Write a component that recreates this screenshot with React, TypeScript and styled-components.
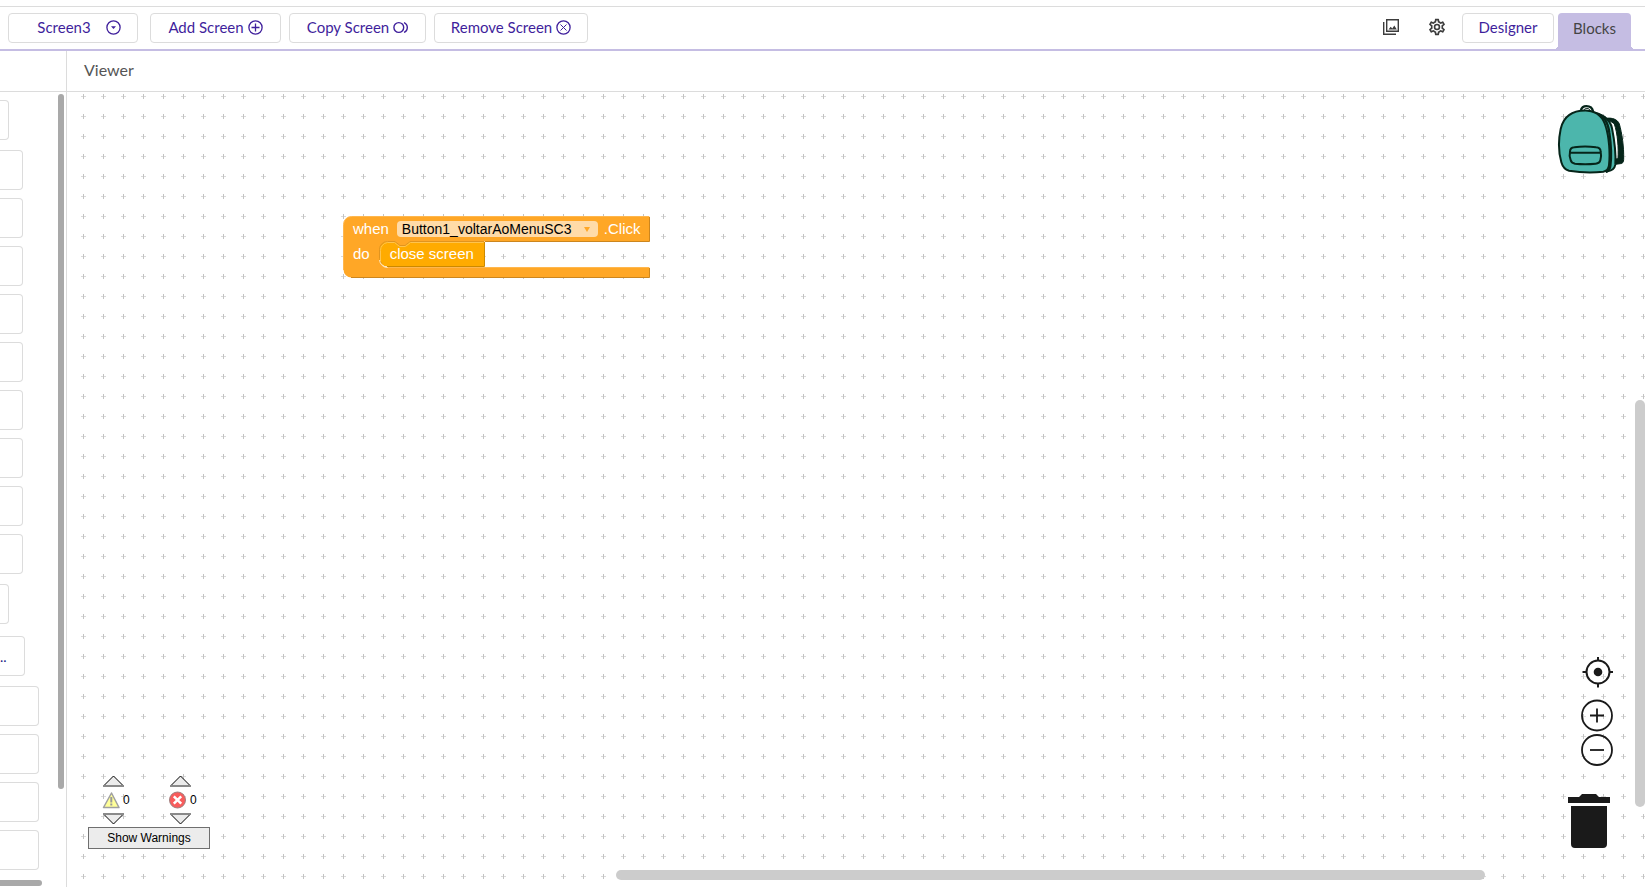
import React from 'react';
import styled, { createGlobalStyle } from 'styled-components';

const GlobalStyle = createGlobalStyle`
  * { box-sizing: border-box; }
  body { margin: 0; background: #fff; font-family: Lato, "Liberation Sans", sans-serif; }
  button, select { font-family: inherit; margin: 0; }
  svg { display: block; }
`;

const Page = styled.div`
  display: flex;
  flex-direction: column;
  height: 100vh;
  overflow: hidden;
  padding-top: 6px;
`;

const Toolbar = styled.header`
  display: flex;
  justify-content: space-between;
  flex: none;
  height: 45px;
  padding: 6px 14px 0 8px;
  border-top: 1px solid #dcdcdc;
  border-bottom: 2px solid #c5bde3;
`;

const Group = styled.div`
  display: flex;
  align-items: flex-start;
  gap: 8px;
`;

const ToolButton = styled.button<{ $width: number; $menu?: boolean }>`
  display: flex;
  align-items: center;
  justify-content: center;
  gap: ${(p) => (p.$menu ? 15 : 4)}px;
  width: ${(p) => p.$width}px;
  height: 30px;
  margin-right: ${(p) => (p.$menu ? 4 : 0)}px;
  padding: 0 0 2px ${(p) => (p.$menu ? 12 : 0)}px;
  border: 1px solid #dcdcdc;
  border-radius: 4px;
  background: #fff;
  color: #3f1f9c;
  font-size: 15px;
  line-height: 20px;
  white-space: nowrap;
`;

const IconButton = styled.button<{ $after: number }>`
  width: 18px;
  height: 18px;
  margin: 5px ${(p) => p.$after}px 0 0;
  padding: 0;
  border: 0;
  background: none;
  color: #3c3c3c;
`;

const ActiveTab = styled.button`
  position: relative;
  width: 73px;
  height: 38px;
  margin-left: -4px;
  padding: 0 0 8px;
  border: 0;
  border-radius: 4px 4px 0 0;
  background: #c5bde3;
  color: #444;
  font-size: 15px;
  line-height: 20px;

  &::before,
  &::after {
    content: '';
    position: absolute;
    bottom: 2px;
    width: 4px;
    height: 4px;
  }
  &::before {
    left: -4px;
    background: radial-gradient(circle at 0 0, transparent 4px, #c5bde3 4px);
  }
  &::after {
    right: -4px;
    background: radial-gradient(circle at 100% 0, transparent 4px, #c5bde3 4px);
  }
`;

const Workspace = styled.div`
  display: flex;
  flex: 1;
  min-height: 0;
`;

const Sidebar = styled.aside`
  display: flex;
  flex-direction: column;
  flex: none;
  width: 67px;
  border-right: 1px solid #dcdcdc;
`;

const PanelTitle = styled.div`
  flex: none;
  height: 41px;
  padding: 9px 17px;
  border-bottom: 1px solid #dcdcdc;
  color: #555;
  font-size: 16px;
  line-height: 20px;
`;

const SidebarBody = styled.div`
  display: grid;
  grid-template-columns: 1fr 6px;
  grid-template-rows: 1fr 6px;
  flex: 1;
  min-height: 0;
  padding: 2px 2px 1px 0;
`;

const Tree = styled.nav`
  display: flex;
  flex-direction: column;
  gap: 8px;
  min-height: 0;
  overflow: hidden;
  padding-top: 6px;
`;

const TreeItem = styled.button<{ $width: number; $above?: number }>`
  flex: none;
  width: ${(p) => p.$width}px;
  height: 40px;
  margin-top: ${(p) => p.$above ?? 0}px;
  padding: 0;
  border: 1px solid #dcdcdc;
  border-left: 0;
  border-radius: 0 4px 4px 0;
  background: #fff;
  color: #1d1d84;
  font-size: 14px;
  text-align: left;
`;

const SideThumbV = styled.div`
  height: calc(100% - 91px);
  border-radius: 3px;
  background: #a9a9a9;
`;

const SideThumbH = styled.div`
  width: 42px;
  border-radius: 0 3px 3px 0;
  background: #a9a9a9;
`;

const Viewer = styled.main`
  display: flex;
  flex-direction: column;
  flex: 1;
  min-width: 0;
`;

const Canvas = styled.section`
  position: relative;
  flex: 1;
  min-height: 0;
  overflow: hidden;
`;

const Grid = styled.svg`
  width: 100%;
  height: 100%;
`;

const Block = styled.div`
  position: absolute;
  left: 276px;
  top: 124px;
  width: 308px;
  height: 63px;
  color: #fff;
  font: 15px/18px "Liberation Sans", Arial, sans-serif;
`;

const BlockShape = styled.svg`
  position: absolute;
  inset: 0;
`;

const BlockRow = styled.div`
  position: relative;
  display: flex;
  align-items: center;
  height: 25px;
  padding-left: 10px;
`;

const EventField = styled.label`
  position: relative;
  margin: 0 6px 0 8px;

  svg {
    position: absolute;
    right: 8px;
    top: 6px;
  }
`;

const EventSelect = styled.select`
  display: block;
  width: 201px;
  height: 16px;
  padding: 0 0 0 5px;
  border: 0;
  border-radius: 4px;
  appearance: none;
  background: #ffdba8;
  color: #000;
  font: 14px/16px "Liberation Sans", Arial, sans-serif;
`;

const Statement = styled.span`
  margin-left: 20px;
`;

const Backpack = styled.button`
  position: absolute;
  top: 12px;
  right: 20px;
  padding: 0;
  border: 0;
  background: none;
`;

const Controls = styled.div`
  position: absolute;
  right: 31px;
  bottom: 120px;
  display: flex;
  flex-direction: column;
  gap: 2px;
`;

const ControlButton = styled.button<{ $below?: number }>`
  width: 33px;
  height: 33px;
  margin-bottom: ${(p) => p.$below ?? 0}px;
  padding: 0;
  border: 0;
  background: none;
`;

const Trash = styled.button`
  position: absolute;
  right: 35px;
  bottom: 39px;
  padding: 0;
  border: 0;
  background: none;
`;

const Warnings = styled.div`
  position: absolute;
  left: 21px;
  bottom: 38px;
  width: 122px;
  font: 12px/16px "Liberation Sans", Arial, sans-serif;
`;

const Counters = styled.div`
  display: flex;
  gap: 38px;
  padding: 0 0 2px 14px;
`;

const Counter = styled.div`
  display: grid;
  justify-items: start;
  width: 29px;
  row-gap: 4px;
`;

const StepButton = styled.button`
  margin-left: 1px;
  padding: 0;
  border: 0;
  background: none;
`;

const Count = styled.div`
  display: flex;
  align-items: center;
  gap: 3px;
  height: 18px;
`;

const ShowWarnings = styled.button`
  width: 100%;
  height: 22px;
  padding: 0;
  border: 1px solid #6f6f6f;
  background: #ececec;
  color: #000;
  font-size: 12px;
  line-height: 20px;
`;

const ScrollV = styled.div`
  position: absolute;
  top: 308px;
  right: 0;
  bottom: 80px;
  width: 10px;
  border-radius: 5px;
  background: #ccc;
`;

const ScrollH = styled.div`
  position: absolute;
  left: 549px;
  right: 160px;
  bottom: 7px;
  height: 10px;
  border-radius: 5px;
  background: #ccc;
`;

type Glyph = 'menu' | 'add' | 'copy' | 'remove';

function ToolIcon({ kind }: { kind: Glyph }) {
  return (
    <svg width="15" height="15" viewBox="0 0 15 15" fill="none" stroke="currentColor" strokeWidth="1.3">
      {kind === 'copy' ? (
        <path d="M10.700 7.500a4.900 4.900 0 1 1-9.800 0a4.900 4.900 0 0 1 9.800 0zM11 2.600c4.400 1.800 4.400 8 0 9.800" strokeWidth="1.4" />
      ) : (
        <circle cx="7.5" cy="7.5" r="6.6" />
      )}
      {kind === 'menu' && <path d="M5 6.3h5L7.5 9z" fill="currentColor" stroke="none" />}
      {kind === 'add' && <path d="M7.5 3.5v8M3.5 7.5h8" />}
      {kind === 'remove' && <path d="M4.5 4.5l6 6M10.5 4.5l-6 6" strokeWidth="1" />}
    </svg>
  );
}

function StepArrow({ down = false }: { down?: boolean }) {
  return (
    <svg width="21" height="12" viewBox="0 0 21 12">
      <path d={down ? 'M.5 1h20l-10 10z' : 'M.5 11h20l-10-10z'} fill="#ececec" />
      <path d={down ? 'M.5 1l10 10l10-10' : 'M.5 11l10-10l10 10'} fill="none" stroke="#000" />
      <path d={down ? 'M0 1h21' : 'M0 11h21'} stroke="#8a8a8a" strokeWidth="2" />
    </svg>
  );
}

const treeItems: { width: number; above?: number; text?: string }[] = [
  { width: 9 },
  { width: 23, above: 2 },
  ...Array.from({ length: 8 }, () => ({ width: 23 })),
  { width: 9, above: 2 },
  { width: 25, above: 4, text: '..' },
  { width: 39, above: 2 },
  { width: 39 },
  { width: 39 },
  { width: 39 },
];

export default function App() {
  return (
    <Page>
      <GlobalStyle />
      <Toolbar>
        <Group>
          <ToolButton $width={130} $menu>
            Screen3
            <ToolIcon kind="menu" />
          </ToolButton>
          <ToolButton $width={131}>
            Add Screen
            <ToolIcon kind="add" />
          </ToolButton>
          <ToolButton $width={137}>
            Copy Screen
            <ToolIcon kind="copy" />
          </ToolButton>
          <ToolButton $width={154}>
            Remove Screen
            <ToolIcon kind="remove" />
          </ToolButton>
        </Group>
        <Group>
          <IconButton $after={20} aria-label="Assets">
            <svg width="18" height="18" viewBox="0 0 18 18" fill="none" stroke="currentColor" strokeWidth="1.4">
              <path d="M4.7 1.7h11.6v11.6H4.7zM1.7 4v12.3H14" />
              <path d="M6.5 11.5l2.2-2.7 1.6 1.7 2-3 2.5 4z" fill="currentColor" stroke="none" />
            </svg>
          </IconButton>
          <IconButton $after={8} aria-label="Settings">
            <svg width="18" height="18" viewBox="1 1 22 22" fill="currentColor">
              <path d="M19.43 12.98c.04-.32.07-.64.07-.98s-.03-.66-.07-.98l2.11-1.65c.19-.15.24-.42.12-.64l-2-3.46a.5.5 0 0 0-.61-.22l-2.49 1c-.52-.4-1.08-.73-1.69-.98l-.38-2.65A.49.49 0 0 0 14 2h-4c-.25 0-.46.18-.49.42l-.38 2.65c-.61.25-1.17.59-1.69.98l-2.49-1a.5.5 0 0 0-.61.22l-2 3.46c-.13.22-.07.49.12.64l2.11 1.65c-.04.32-.07.65-.07.98s.03.66.07.98l-2.11 1.65c-.19.15-.24.42-.12.64l2 3.46c.12.22.39.3.61.22l2.49-1c.52.4 1.08.73 1.69.98l.38 2.65c.03.24.24.42.49.42h4c.25 0 .46-.18.49-.42l.38-2.65c.61-.25 1.17-.59 1.69-.98l2.49 1c.23.09.49 0 .61-.22l2-3.46c.12-.22.07-.49-.12-.64zm-1.98-1.71c.04.31.05.52.05.73s-.02.43-.05.73l-.14 1.13.89.7 1.08.84-.7 1.21-1.27-.51-1.04-.42-.9.68c-.43.32-.84.56-1.25.73l-1.06.43-.16 1.13-.2 1.35h-1.4l-.35-2.48-1.06-.43c-.43-.18-.83-.41-1.23-.71l-.91-.7-1.06.43-1.27.51-.7-1.21 1.08-.84.89-.7-.14-1.13A7 7 0 0 1 6.5 12c0-.2.02-.43.05-.73l.14-1.13-.89-.7-1.08-.84.7-1.21 1.27.51 1.04.42.9-.68c.43-.32.84-.56 1.25-.73l1.06-.43.16-1.13.2-1.35h1.39l.35 2.48 1.06.43c.43.18.83.41 1.23.71l.91.7 1.06-.43 1.27-.51.7 1.21-1.07.85-.89.7zM12 8a4 4 0 1 0 0 8 4 4 0 0 0 0-8zm0 6a2 2 0 1 1 0-4 2 2 0 0 1 0 4z" />
            </svg>
          </IconButton>
          <ToolButton $width={92}>Designer</ToolButton>
          <ActiveTab>Blocks</ActiveTab>
        </Group>
      </Toolbar>

      <Workspace>
        <Sidebar>
          <PanelTitle />
          <SidebarBody>
            <Tree aria-label="Blocks">
              {treeItems.map((item, i) => (
                <TreeItem key={i} $width={item.width} $above={item.above}>
                  {item.text}
                </TreeItem>
              ))}
            </Tree>
            <SideThumbV />
            <SideThumbH />
          </SidebarBody>
        </Sidebar>

        <Viewer>
          <PanelTitle>Viewer</PanelTitle>
          <Canvas>
            <Grid>
              <defs>
                <pattern id="grid" width="20" height="20" x="6" y="-6" patternUnits="userSpaceOnUse">
                  <path d="M8 10.500h5" stroke="#dadada" />
                  <path d="M10.500 8v5" stroke="#c4c4c4" />
                </pattern>
              </defs>
              <rect width="100%" height="100%" fill="url(#grid)" />
            </Grid>

            <Block>
              <BlockShape width="308" height="63" viewBox="0 0 308 63" fill="none">
                <path
                  d="M8.500 .5H306.500V25.500H67l-5 4h-5l-5-4h-7a8 8 0 0 0-8 8v10a8 8 0 0 0 8 8H306.500V61.500H8.500a8 8 0 0 1-8-8V8.500a8 8 0 0 1 8-8z"
                  fill="#ffa726"
                />
                <path d="M306.500 1V25.500H142M306.500 52v9.500H8" stroke="#cc861e" />
                <path d="M.5 54V8.500a8 8 0 0 1 8-8H306M45 51.500H306" stroke="#ffb74d" />
                <path
                  d="M44.500 25.500H52l5 4h5l5-4h74v25H44.500a8 8 0 0 1-8-8v-9a8 8 0 0 1 8-8z"
                  fill="#ffab00"
                />
                <path d="M141.500 26v24.500H44" stroke="#cc8900" />
                <path d="M39 47.500a8 8 0 0 1-2.500-5v-9a8 8 0 0 1 8-8H52l5 4h5l5-4h74" stroke="#e09420" />
                <path d="M37.500 45v-10.500a8 8 0 0 1 7-8H51.500l5 4h6l5-4h73" stroke="#ffc44d" />
                <path d="M36.500 44a8 8 0 0 0 8 7.500" stroke="#ffe3b3" />
              </BlockShape>
              <BlockRow>
                <span>when</span>
                <EventField>
                  <EventSelect aria-label="Component" defaultValue="Button1_voltarAoMenuSC3">
                    <option>Button1_voltarAoMenuSC3</option>
                  </EventSelect>
                  <svg width="6" height="5" viewBox="0 0 6 5">
                    <path d="M0 0h6L3 5z" fill="#ffa726" />
                  </svg>
                </EventField>
                <span>.Click</span>
              </BlockRow>
              <BlockRow>
                <span>do</span>
                <Statement>close screen</Statement>
              </BlockRow>
            </Block>

            <Backpack aria-label="Backpack">
              <svg width="68" height="70" viewBox="636 312 204 210" strokeLinecap="round" strokeLinejoin="round">
                <path
                  d="M784 355C800 352 818 358 823 372C831 400 837 440 836 478Q836 491 826 491L811 493L812 477L819 476C821 446 818 400 808 372Z"
                  fill="#06251a"
                  stroke="#06251a"
                  strokeWidth="3"
                />
                <path d="M708 332C708 314 740 313 744 334" fill="none" stroke="#06251a" strokeWidth="7" />
                <path d="M716 331C719 323 732 323 736 331Z" fill="#fff" stroke="#06251a" strokeWidth="3" />
                <path
                  d="M740 336C770 340 795 357 801 385C808 420 813 460 811 494Q808 511 788 514L740 500Z"
                  fill="#4cb6ac"
                  stroke="#06251a"
                  strokeWidth="6"
                />
                <path d="M757 342C782 350 790 372 793 398C799 440 800 470 796 498Q795 510 785 515" fill="none" stroke="#06251a" strokeWidth="7" />
                <path
                  d="M728 332C686 330 656 348 647 387C640 420 640 455 649 487Q655 508 672 512Q725 521 775 515Q790 512 792 495C796 460 792 412 783 382C776 354 759 335 728 332Z"
                  fill="#4cb6ac"
                  stroke="#06251a"
                  strokeWidth="6"
                />
                <path
                  d="M675 455Q675 443 688 442Q720 437 753 442Q767 443 767 455Q770 468 766 481Q764 490 752 491Q720 494 690 491Q679 489 677 480Q672 466 675 455ZM675 458H767"
                  fill="none"
                  stroke="#06251a"
                  strokeWidth="6"
                />
              </svg>
            </Backpack>

            <Controls>
              <ControlButton $below={8} aria-label="Center workspace">
                <svg width="33" height="33" viewBox="0 0 33 33" fill="none" stroke="#1a1a1a" strokeWidth="2">
                  <circle cx="17" cy="16" r="11.500" />
                  <circle cx="17" cy="16" r="4.300" fill="#1a1a1a" stroke="none" />
                  <path d="M17 1v4M17 27v4.500M1.500 16H6M28 16h4" />
                </svg>
              </ControlButton>
              <ControlButton aria-label="Zoom in">
                <svg width="33" height="33" viewBox="0 0 33 33" fill="none" stroke="#1a1a1a" strokeWidth="1.800">
                  <circle cx="16" cy="16.500" r="15" />
                  <path d="M16 9.500v14M9 16.500h14" />
                </svg>
              </ControlButton>
              <ControlButton aria-label="Zoom out">
                <svg width="33" height="33" viewBox="0 0 33 33" fill="none" stroke="#1a1a1a" strokeWidth="1.800">
                  <circle cx="16" cy="16" r="15" />
                  <path d="M9 16h14" />
                </svg>
              </ControlButton>
            </Controls>

            <Trash aria-label="Trash">
              <svg width="42" height="54" viewBox="0 0 42 54" fill="#1a1a1a">
                <path d="M0 3h11l3-3h14l3 3h11v6H0zM3 12h36v38a4 4 0 0 1-4 4H7a4 4 0 0 1-4-4z" />
              </svg>
            </Trash>

            <Warnings>
              <Counters>
                <Counter>
                  <StepButton aria-label="Previous warning">
                    <StepArrow />
                  </StepButton>
                  <Count>
                    <svg width="18" height="17" viewBox="0 0 18 17">
                      <path d="M9.500 1L17 15.500H1.500z" fill="#ffff99" stroke="#a0a0a0" strokeWidth="1.500" strokeLinejoin="round" />
                      <path d="M9.300 5v5.500M9.300 11.500v2" stroke="#999" strokeWidth="2" />
                    </svg>
                    0
                  </Count>
                  <StepButton aria-label="Next warning">
                    <StepArrow down />
                  </StepButton>
                </Counter>
                <Counter>
                  <StepButton aria-label="Previous error">
                    <StepArrow />
                  </StepButton>
                  <Count>
                    <svg width="18" height="18" viewBox="0 0 18 18">
                      <circle cx="8.500" cy="9" r="8" fill="#f85c5c" stroke="#a08080" />
                      <path d="M4.800 5.300l7.400 7.400M12.200 5.300l-7.400 7.400" stroke="#fff" strokeWidth="2.500" />
                    </svg>
                    0
                  </Count>
                  <StepButton aria-label="Next error">
                    <StepArrow down />
                  </StepButton>
                </Counter>
              </Counters>
              <ShowWarnings>Show Warnings</ShowWarnings>
            </Warnings>

            <ScrollV />
            <ScrollH />
          </Canvas>
        </Viewer>
      </Workspace>
    </Page>
  );
}
